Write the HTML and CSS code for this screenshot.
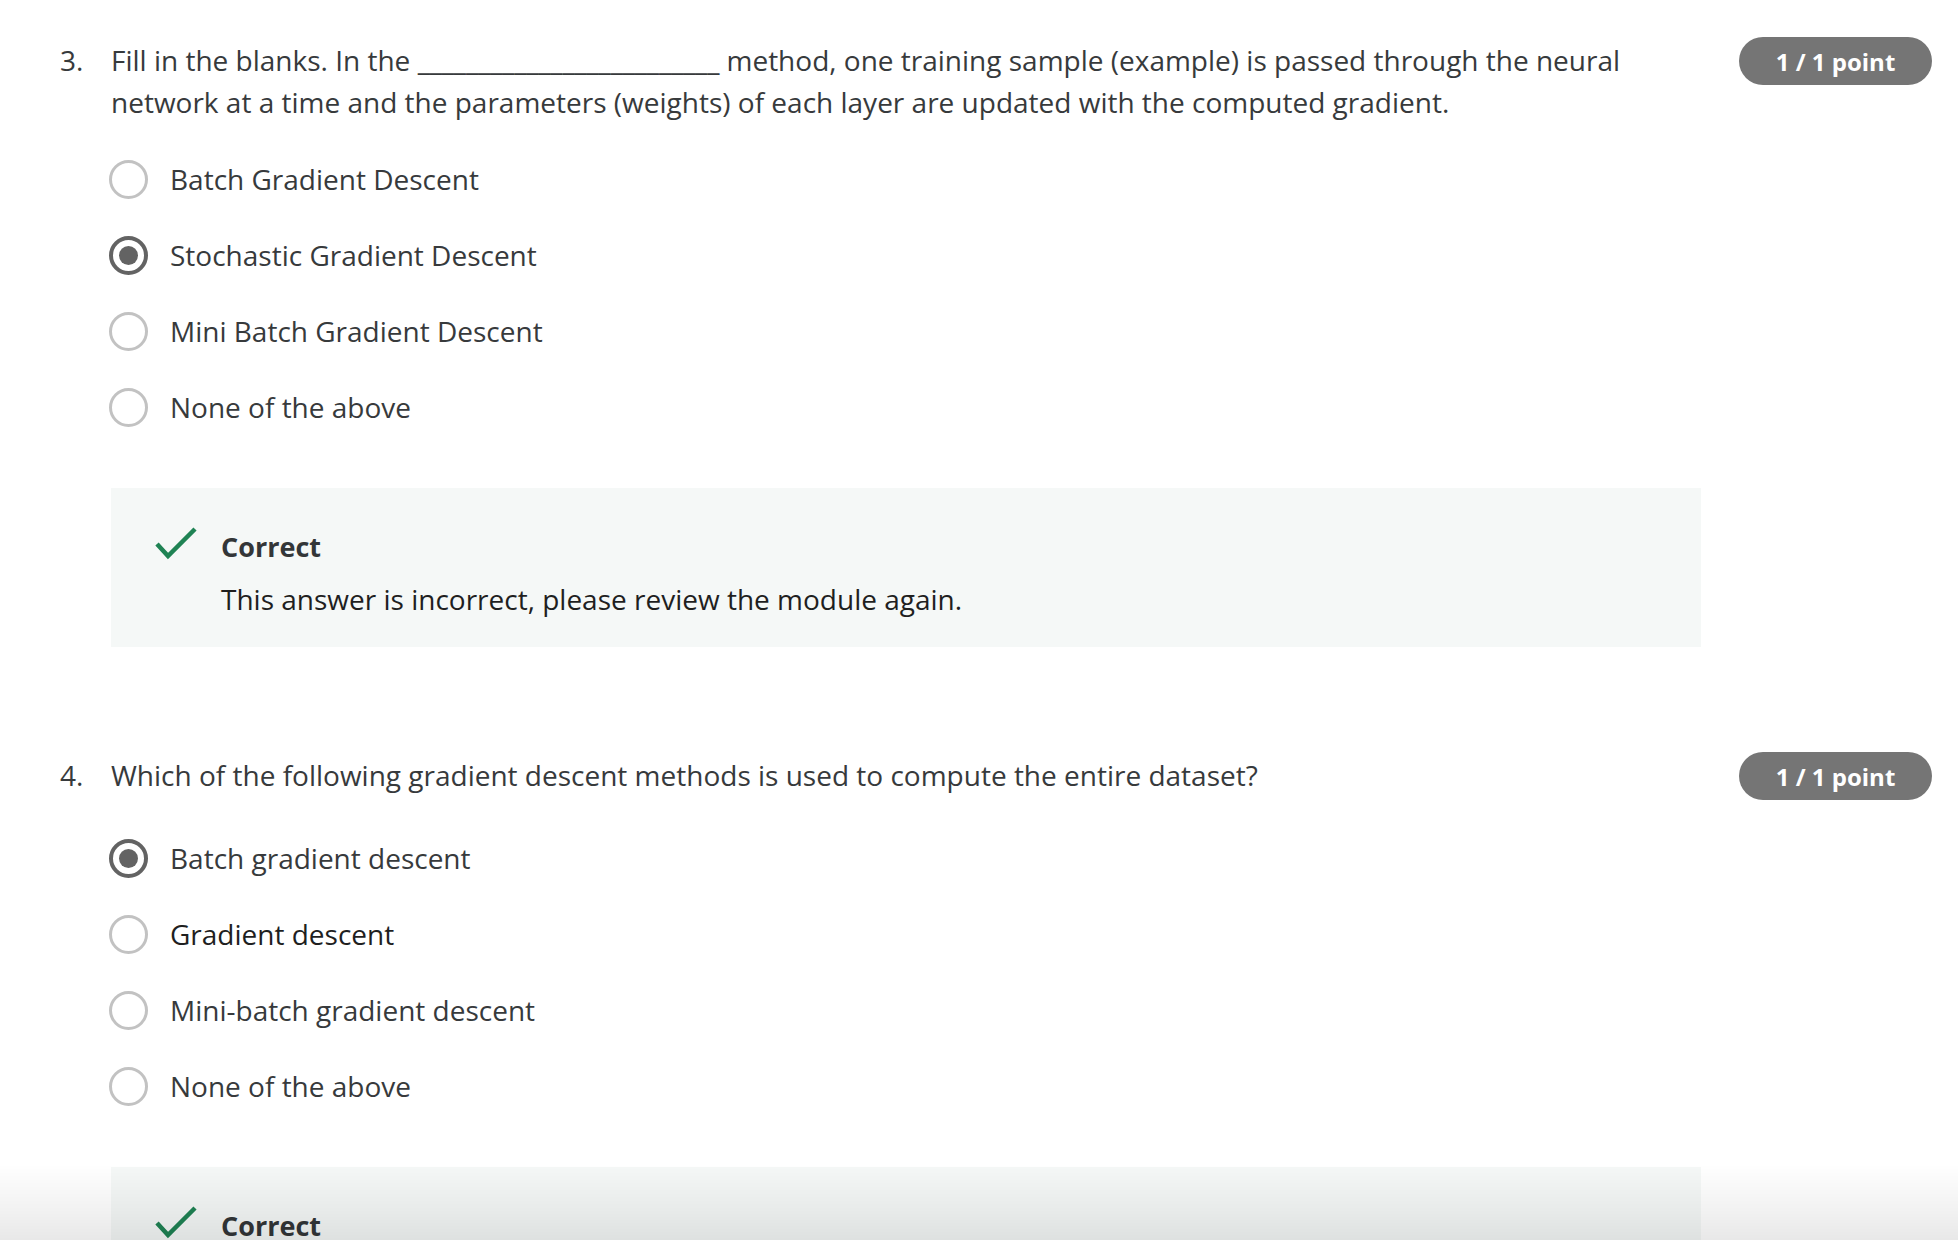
FILE: index.html
```html
<!DOCTYPE html>
<html lang="en">
<head>
<meta charset="utf-8">
<title>Quiz</title>
<link rel="stylesheet" href="styles.css">
</head>
<body>
<main class="quiz">
  <section class="question q3">
    <div class="num">3.</div>
    <div class="body">
      <p class="prompt">Fill in the blanks. In the <span class="blank">_________________________</span> method, one training sample (example) is passed through the neural network at a time and the parameters (weights) of each layer are updated with the computed gradient.</p>
      <ul class="options">
        <li class="option"><span class="radio"></span><span class="label">Batch Gradient Descent</span></li>
        <li class="option"><span class="radio checked"></span><span class="label">Stochastic Gradient Descent</span></li>
        <li class="option"><span class="radio"></span><span class="label">Mini Batch Gradient Descent</span></li>
        <li class="option"><span class="radio"></span><span class="label">None of the above</span></li>
      </ul>
      <div class="feedback">
        <svg class="check" viewBox="0 0 44 34" width="44" height="34"><path d="M3 17 L14 29 L41 2" fill="none" stroke="#1f8354" stroke-width="4.5"/></svg>
        <div class="fb-text">
          <div class="fb-title">Correct</div>
          <div class="fb-desc">This answer is incorrect, please review the module again.</div>
        </div>
      </div>
    </div>
    <div class="badge">1 / 1 point</div>
  </section>

  <section class="question q4">
    <div class="num">4.</div>
    <div class="body">
      <p class="prompt">Which of the following gradient descent methods is used to compute the entire dataset?</p>
      <ul class="options">
        <li class="option"><span class="radio checked"></span><span class="label">Batch gradient descent</span></li>
        <li class="option"><span class="radio"></span><span class="label dark">Gradient descent</span></li>
        <li class="option"><span class="radio"></span><span class="label">Mini-batch gradient descent</span></li>
        <li class="option"><span class="radio"></span><span class="label">None of the above</span></li>
      </ul>
      <div class="feedback">
        <svg class="check" viewBox="0 0 44 34" width="44" height="34"><path d="M3 17 L14 29 L41 2" fill="none" stroke="#1f8354" stroke-width="4.5"/></svg>
        <div class="fb-text">
          <div class="fb-title">Correct</div>
          <div class="fb-desc">This answer is correct.</div>
        </div>
      </div>
    </div>
    <div class="badge">1 / 1 point</div>
  </section>
</main>
<div class="bottom-fade"></div>
</body>
</html>
```

FILE: styles.css
```css
html, body {
  margin: 0;
  padding: 0;
  background: #ffffff;
}
body {
  font-family: "Open Sans", "Noto Sans", sans-serif;
  color: #373a3c;
  font-size: 28px;
  overflow: hidden;
  height: 1240px;
}
.quiz {
  padding: 39px 26px 0 60px;
}
.question {
  display: grid;
  grid-template-columns: 51px 1590px 1fr;
  align-items: start;
}
.q4 {
  margin-top: 107px;
}
.num {
  line-height: 42px;
}
.prompt {
  margin: 0;
  line-height: 42px;
}
.blank {
  letter-spacing: -0.2px;
}
.badge {
  justify-self: end;
  margin-top: -2px;
  width: 193px;
  height: 48px;
  border-radius: 24px;
  background: #757575;
  color: #ffffff;
  font-weight: 700;
  font-size: 24px;
  display: flex;
  align-items: center;
  justify-content: center;
}
.options {
  list-style: none;
  margin: 18px 0 0 0;
  padding: 0;
}
.q4 .options {
  margin-top: 24px;
}
.option {
  height: 76px;
  display: flex;
  align-items: center;
}
.radio {
  box-sizing: border-box;
  width: 39px;
  height: 39px;
  border-radius: 50%;
  border: 3px solid #c2c2c2;
  margin-left: -2px;
  margin-right: 22px;
  display: flex;
  align-items: center;
  justify-content: center;
  flex: none;
}
.radio.checked {
  border: 4px solid #636363;
}
.radio.checked::after {
  content: "";
  width: 19px;
  height: 19px;
  border-radius: 50%;
  background: #636363;
}
.label {
  line-height: 40px;
}
.label.dark {
  color: #1f1f1f;
}
.feedback {
  margin-top: 43px;
  background: #f5f8f7;
  height: 159px;
  box-sizing: border-box;
  padding: 37px 40px 0 43px;
  display: flex;
  align-items: flex-start;
}
.check {
  flex: none;
  margin-top: 2px;
  margin-right: 23px;
}
.fb-title {
  font-weight: 700;
  line-height: 44px;
  color: #333638;
  font-size: 27px;
}
.fb-desc {
  margin-top: 10px;
  line-height: 40px;
  color: #1f1f1f;
}
.bottom-fade {
  position: fixed;
  left: 0;
  right: 0;
  bottom: 0;
  height: 76px;
  background: linear-gradient(to bottom, rgba(0,0,0,0) 0%, rgba(0,0,0,0.05) 60%, rgba(0,0,0,0.09) 100%);
  pointer-events: none;
}
```
